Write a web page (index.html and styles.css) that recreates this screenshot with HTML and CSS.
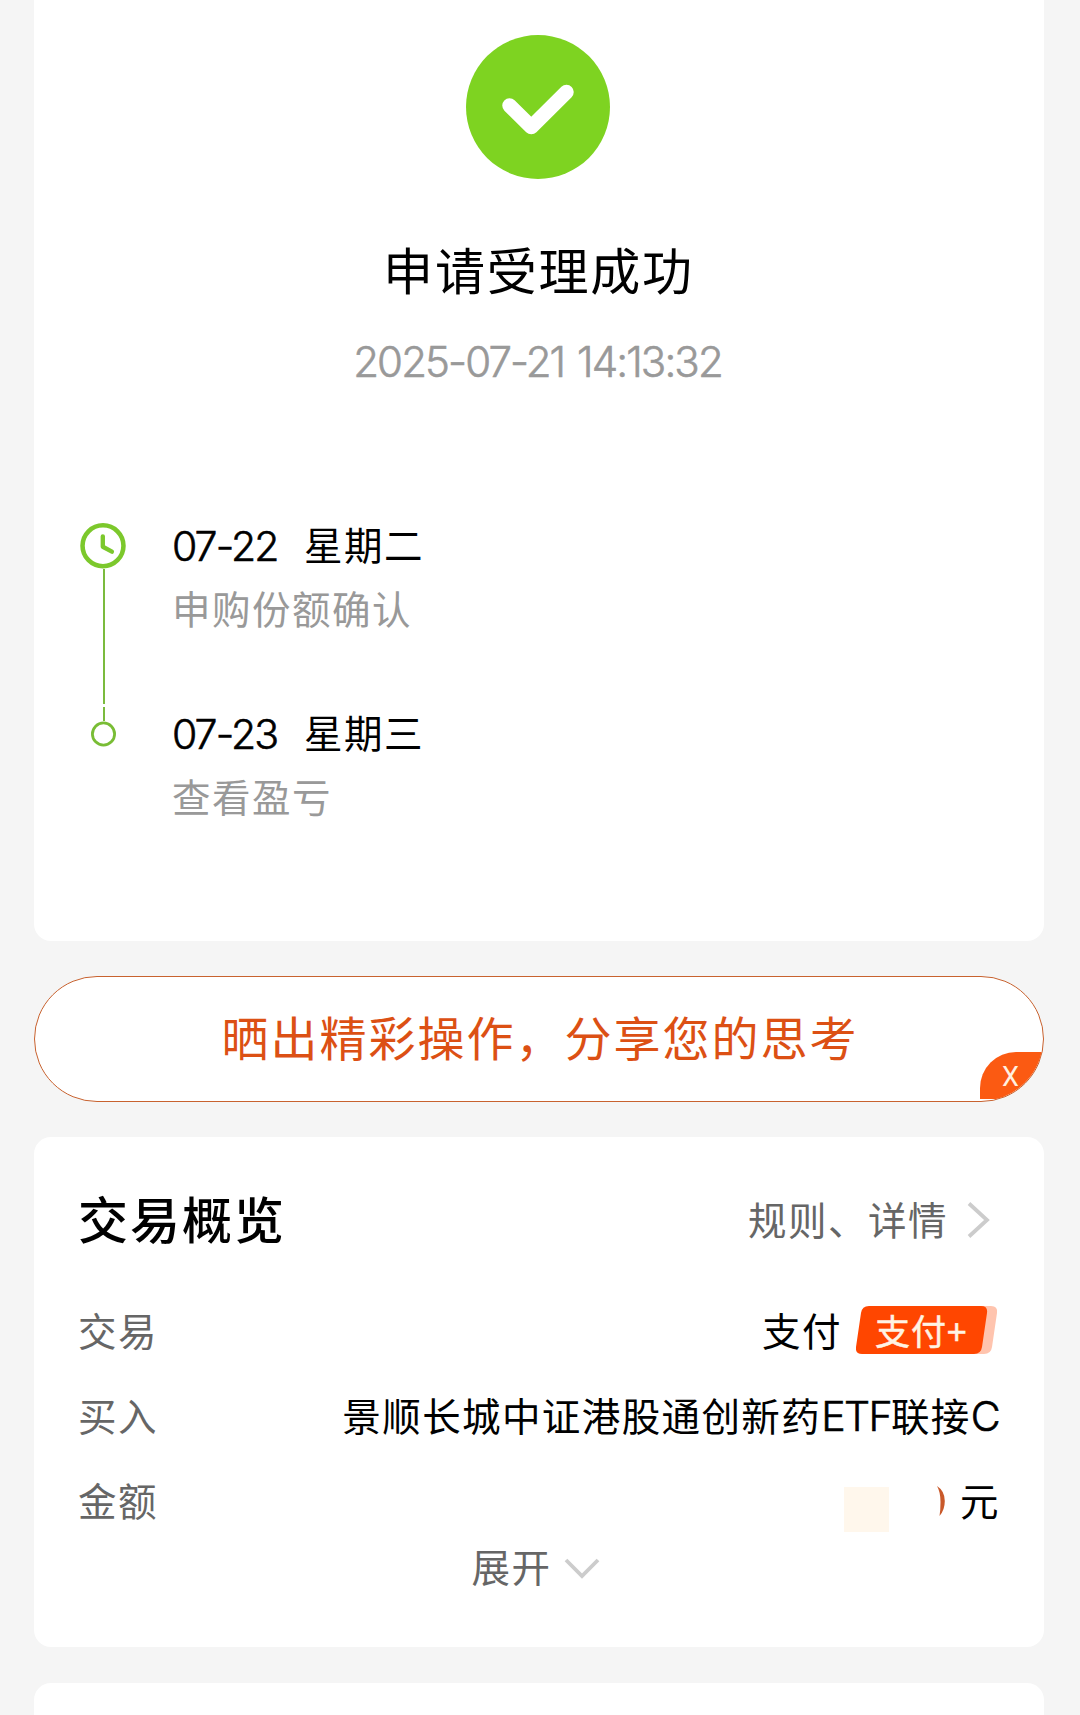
FILE: index.html
```
<!DOCTYPE html>
<html lang="zh-CN">
<head>
    <meta charset="UTF-8">
    <meta name="viewport" content="width=device-width, initial-scale=1.0">
    <title>申请受理成功</title>
    <link rel="stylesheet" href="styles.css">
</head>
<body>
    <section class="card result">
        <svg class="result-icon" width="144" height="144" viewBox="0 0 144 144">
            <circle cx="72" cy="72" r="72" fill="#7ed321"/>
            <path d="M43.5 70.5L65.3 92L100.5 57" fill="none" stroke="#fff" stroke-width="14.5" stroke-linecap="round" stroke-linejoin="round"/>
        </svg>
        <h1 class="result-title">申请受理成功</h1>
        <div class="result-time">2025-07-21 14:13:32</div>

        <ul class="timeline">
            <li class="step">
                <div class="marker">
                    <svg width="46" height="46" viewBox="0 0 46 46" fill="none" stroke="#7cc82c">
                        <circle cx="23" cy="23" r="20.7" stroke-width="4.6"/>
                        <path d="M22.8 13.5V24L32 29" stroke-width="4.4" stroke-linecap="round" stroke-linejoin="round"/>
                    </svg>
                    <div class="line"></div>
                </div>
                <div class="step-text">
                    <div class="step-date"><span class="num">07-22</span><span>星期二</span></div>
                    <div class="step-desc">申购份额确认</div>
                </div>
            </li>
            <li class="step">
                <div class="marker marker-last">
                    <div class="line"></div>
                    <svg width="26" height="26" viewBox="0 0 26 26">
                        <circle cx="13.5" cy="13" r="11.1" fill="none" stroke="#79bd35" stroke-width="2.8"/>
                    </svg>
                </div>
                <div class="step-text">
                    <div class="step-date"><span class="num">07-23</span><span>星期三</span></div>
                    <div class="step-desc">查看盈亏</div>
                </div>
            </li>
        </ul>
    </section>

    <div class="share">
        <span class="share-text">晒出精彩操作，分享您的思考</span>
        <span class="share-close">X</span>
    </div>

    <section class="card overview">
        <div class="overview-head">
            <h2 class="overview-title">交易概览</h2>
            <a class="rules">规则、详情
                <svg width="24" height="38" viewBox="0 0 24 38">
                    <path d="M2 2.5L20 19L2 35.5" fill="none" stroke="#ccc" stroke-width="3.8"/>
                </svg>
            </a>
        </div>
        <div class="row">
            <span class="label">交易</span>
            <span class="value pay">支付
                <span class="badge">
                    <svg class="badge-bg" width="142" height="48" viewBox="0 0 142 48">
                        <path d="M18 0H135Q142 0 141 7L136 41Q135 48 128 48H12Z" fill="#ffc4ae"/>
                        <path d="M13 0H125Q132 0 131 7L126 41Q125 48 118 48H6Q-1 48 0 41L5 7Q6 0 13 0Z" fill="#ff4600"/>
                    </svg>
                    <span class="badge-text">支付<span class="plus">+</span></span>
                </span>
            </span>
        </div>
        <div class="row">
            <span class="label">买入</span>
            <span class="value fund">景顺长城中证港股通创新药<span class="latin">ETF</span>联接<span class="latin">C</span></span>
        </div>
        <div class="row">
            <span class="label">金额</span>
            <span class="value amount">
                <span class="mask"></span>
                <svg class="digit" width="8" height="30" viewBox="0 0 8 30">
                    <path d="M0 0Q7.8 5 7.8 15Q7.8 24 2.5 30Q3.5 24 3.5 16Q3.5 6 0 0Z" fill="#c9592a"/>
                </svg>
                <span class="unit">元</span>
            </span>
        </div>
        <div class="expand">展开
            <svg width="36" height="22" viewBox="0 0 36 22">
                <path d="M2 2L18 18L34 2" fill="none" stroke="#ccc" stroke-width="3.8"/>
            </svg>
        </div>
    </section>

    <section class="card next"></section>
</body>
</html>
```

FILE: styles.css
```
* {
    box-sizing: border-box;
}

body {
    margin: 0;
    padding: 0 36px 0 34px;
    height: 1715px;
    overflow: hidden;
    background-color: #f5f5f5;
    color: #000;
    font-family: Inter, "Noto Sans CJK SC", sans-serif;
    font-size: 38.5px;
    letter-spacing: 1.5px;
    line-height: 60px;
}

h1, h2, ul {
    margin: 0;
    padding: 0;
    font-weight: 400;
}

.card {
    background-color: #fff;
    border-radius: 17px;
}

.result {
    height: 941px;
    padding-top: 35px;
    border-radius: 0 0 17px 17px;
}

.result-icon {
    display: block;
    margin: 0 auto;
    position: relative;
    left: -1px;
}

.result-title {
    margin-top: 57px;
    padding-right: 1px;
    text-align: center;
    font-size: 50px;
    line-height: 72px;
    letter-spacing: 1.8px;
}

.result-time {
    margin-top: 24px;
    padding-right: 3px;
    text-align: center;
    font-size: 42px;
    font-weight: 300;
    letter-spacing: -1.9px;
    word-spacing: 3px;
    color: #999;
    -webkit-text-stroke: 0.6px #999;
}

.timeline {
    margin-top: 124px;
    padding-left: 46px;
    list-style: none;
}

.step {
    display: flex;
    height: 188px;
}

.marker {
    display: flex;
    flex-direction: column;
    align-items: center;
    width: 46px;
    height: 188px;
    padding-top: 7px;
    margin-right: 46px;
}

.line {
    width: 2px;
    height: 137px;
    margin-left: 1px;
    background-color: #7bbb3e;
}

.marker-last {
    padding-top: 3px;
}

.marker-last .line {
    height: 14px;
}

.step-date {
    display: flex;
    gap: 29px;
}

.num {
    width: 103px;
    font-size: 41px;
    font-weight: 300;
    letter-spacing: -1.9px;
    white-space: nowrap;
    -webkit-text-stroke: 0.6px #000;
}

.step-desc {
    margin-top: 4px;
    color: #999;
}

.share {
    position: relative;
    display: flex;
    align-items: center;
    justify-content: center;
    height: 126px;
    margin: 35px 0;
    border: 1px solid #c8622f;
    border-radius: 63px;
    background-color: #fff;
    overflow: hidden;
}

.share-text {
    color: #dc5014;
    font-size: 47px;
    letter-spacing: 2px;
    padding-bottom: 1px;
    padding-left: 2px;
}

/* tab tucked into the pill's bottom right corner */
.share-close {
    position: absolute;
    right: 0;
    bottom: 2px;
    width: 63px;
    height: 47px;
    padding-left: 22px;
    border-radius: 36px 0 0 0;
    background-color: #fb5a12;
    color: #fff0e0;
    font-family: Roboto, sans-serif;
    font-size: 27px;
    line-height: 51px;
    letter-spacing: 0;
}

.overview {
    height: 510px;
    padding: 48px 45px 0 44px;
}

.overview-head {
    display: flex;
    justify-content: space-between;
    align-items: center;
    height: 72px;
    margin-bottom: 32px;
}

.overview-title {
    font-size: 50px;
    font-weight: 500;
    letter-spacing: 2px;
}

.rules {
    display: flex;
    align-items: center;
    gap: 19px;
    margin-right: 8px;
    color: #666;
}

.rules svg {
    margin-bottom: 3px;
}

.row {
    display: flex;
    justify-content: space-between;
    align-items: center;
    height: 85px;
}

.label {
    color: #666;
}

.pay {
    display: flex;
    align-items: center;
    gap: 14px;
}

.badge {
    position: relative;
    width: 142px;
    height: 48px;
    margin: 0 1px 3px 0;
    padding-left: 19px;
    color: #fff3e4;
    font-size: 35px;
    line-height: 47px;
    letter-spacing: 1px;
}

.badge-bg {
    position: absolute;
    top: 0;
    left: 0;
}

.badge-text {
    position: relative;
    -webkit-text-stroke: 0.5px #fff3e4;
}

.plus {
    font-family: "Noto Sans CJK SC", sans-serif;
}

.fund {
    letter-spacing: 1.4px;
}

.latin {
    font-size: 41px;
    font-weight: 300;
    letter-spacing: -1.6px;
    -webkit-text-stroke: 0.6px #000;
}

.amount {
    display: flex;
    align-items: center;
}

.mask {
    width: 45px;
    height: 45px;
    margin: 16px 48px 0 0;
    background-color: #fff7ec;
}

.digit {
    margin-bottom: 2px;
}

.unit {
    margin-left: 15px;
    margin-right: -1px;
}

.expand {
    display: flex;
    align-items: center;
    justify-content: center;
    gap: 12px;
    height: 48px;
    padding-right: 6px;
    color: #666;
}

.expand svg {
    margin-top: 1px;
}

.next {
    height: 60px;
    margin-top: 36px;
}
```
